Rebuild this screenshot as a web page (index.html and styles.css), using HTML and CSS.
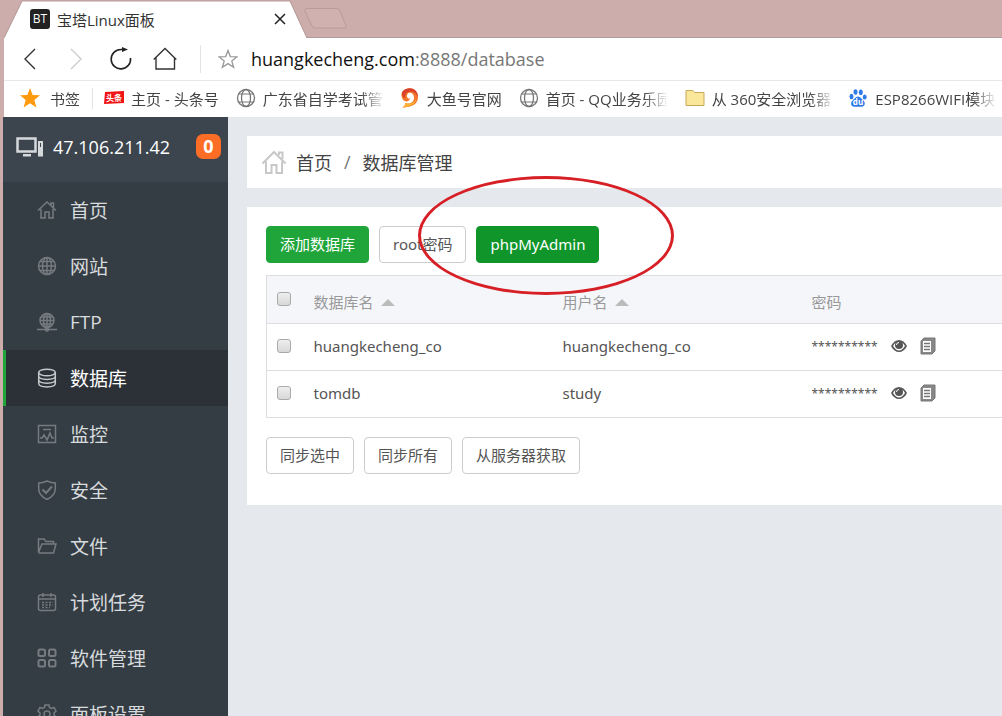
FILE: index.html
```html
<!DOCTYPE html>
<html lang="zh-CN">
  <head>
    <meta charset="utf-8" />
    <title>宝塔Linux面板</title>
    <meta name="viewport" content="width=device-width, initial-scale=1.0" />
    <link rel="stylesheet" href="styles.css">
  </head>
  <body>
    <!-- Browser chrome -->
    <header class="browser">
      <div class="tab-strip">
        <div class="tab">
          <svg class="tab-shape" viewBox="0 0 304 37" preserveAspectRatio="none">
            <path d="M0 37L18 1H286L303 37" fill="#fff" stroke="#b79a9a" />
          </svg>
          <span class="tab-logo">BT</span>
          <span class="tab-title">宝塔Linux面板</span>
          <button class="icon-button tab-close" aria-label="关闭">
            <svg width="12" height="12" viewBox="0 0 12 12">
              <path d="M1 1L11 11M11 1L1 11" stroke="#222" stroke-width="1.5" />
            </svg>
          </button>
        </div>
        <button class="icon-button new-tab" aria-label="新标签页">
          <svg width="43" height="21" viewBox="0 0 43 21">
            <path d="M3 .5H33Q35 .5 36 3L42 18Q42.500 20 40 20H11Q9 20 8 18L1 3Q.5 .5 3 .5Z" fill="#d0b1af" stroke="#b89b9b" />
          </svg>
        </button>
      </div>

      <div class="address-bar">
        <button class="icon-button nav-button" aria-label="后退">
          <svg width="24" height="24" viewBox="0 0 24 24">
            <path d="M17 2L7 12L17 22" fill="none" stroke="#333" stroke-width="1.400" />
          </svg>
        </button>
        <button class="icon-button nav-button" aria-label="前进">
          <svg width="24" height="24" viewBox="0 0 24 24">
            <path d="M8 2L18 12L8 22" fill="none" stroke="#ccc" stroke-width="1.400" />
          </svg>
        </button>
        <button class="icon-button nav-button" aria-label="刷新">
          <svg width="24" height="24" viewBox="0 0 24 24">
            <path d="M22.500 11A9.700 9.700 0 1 1 13 2.500H16" fill="none" stroke="#222" stroke-width="1.600" />
            <path d="M14 0L20 2.500L14 5Z" fill="#222" />
          </svg>
        </button>
        <button class="icon-button nav-button" aria-label="主页">
          <svg width="24" height="24" viewBox="0 0 24 24">
            <path d="M.7 12.500L12 1.500L23.300 12.500M3 10.500V22H21.500V10.500" fill="none" stroke="#333" stroke-width="1.400" />
          </svg>
        </button>
        <span class="divider"></span>
        <button class="icon-button favorite" aria-label="收藏">
          <svg width="20" height="20" viewBox="0 0 20 20">
            <path d="M10 1.500L12.300 7.600L19 7.800L13.800 11.900L15.600 18.300L10 14.600L4.400 18.300L6.200 11.900L1 7.800L7.700 7.600Z" fill="none" stroke="#999" stroke-width="1.300" />
          </svg>
        </button>
        <p class="url"><b>huangkecheng.com</b>:8888/database</p>
      </div>

      <nav class="bookmarks">
        <a class="bookmark all" href="#">
          <svg width="20" height="20" viewBox="0 0 20 20">
            <path d="M10 0L12.700 7L20 7.300L14.300 11.900L16.400 19.500L10 15.300L3.600 19.500L5.700 11.900L0 7.300L7.300 7Z" fill="#ff9a0d" />
          </svg>
          <span>书签</span>
        </a>
        <a class="bookmark" href="#">
          <svg width="20" height="20" viewBox="0 0 20 20">
            <path d="M1 4L20 3V15L0 16Z" fill="#f01414" />
            <text x="10" y="13" class="icon-text">头条</text>
          </svg>
          <span>主页 - 头条号</span>
        </a>
        <a class="bookmark" href="#">
          <svg width="20" height="20" viewBox="0 0 20 20" fill="none" stroke="#777" stroke-width="1.300">
            <circle cx="10" cy="10" r="8.500" />
            <ellipse cx="10" cy="10" rx="4.500" ry="8.500" />
            <path d="M2.500 6H17.500M2.500 14H17.500" stroke-width="1" />
          </svg>
          <span>广东省自学考试管</span>
        </a>
        <a class="bookmark" href="#">
          <svg width="20" height="20" viewBox="0 0 20 20">
            <path d="M3 3C8-2 18 0 18 9C18 16 12 19.500 2 19.500C4.500 18.500 5.500 17 5 15C11 17 14.500 13 14 9C13.500 4.500 9 3.500 7.500 6C6 9 8 11 10 10.500C9 14.500 4 14 2.500 11C1 8 1 5 3 3Z" fill="#f4762b" />
            <path d="M3 3C8-2 18 0 18 9C16 4 11 2 7 4.500C5 6 5 8 5 10C2 9 1 5 3 3Z" fill="#d9402c" />
            <path d="M2 19.500C4.500 18.500 5.500 17 5 15C12 17 16 13 16 10C17 15 11 19.500 2 19.500Z" fill="#fbb034" />
          </svg>
          <span>大鱼号官网</span>
        </a>
        <a class="bookmark" href="#">
          <svg width="20" height="20" viewBox="0 0 20 20" fill="none" stroke="#777" stroke-width="1.300">
            <circle cx="10" cy="10" r="8.500" />
            <ellipse cx="10" cy="10" rx="4.500" ry="8.500" />
            <path d="M2.500 6H17.500M2.500 14H17.500" stroke-width="1" />
          </svg>
          <span>首页 - QQ业务乐园</span>
        </a>
        <a class="bookmark" href="#">
          <svg width="20" height="20" viewBox="0 0 20 20">
            <path d="M1 17.500V2.500H8L9.500 4.500H19V17.500Z" fill="#fbe79a" stroke="#c8a85a" />
          </svg>
          <span>从 360安全浏览器</span>
        </a>
        <a class="bookmark" href="#">
          <svg width="20" height="20" viewBox="0 0 20 20" fill="#2f7be8">
            <ellipse cx="3.500" cy="8.500" rx="2" ry="2.700" />
            <ellipse cx="7.500" cy="4" rx="2" ry="2.800" />
            <ellipse cx="12.800" cy="4.200" rx="2" ry="2.800" />
            <ellipse cx="16.700" cy="9" rx="2" ry="2.600" />
            <path d="M10 8.500C12.500 8.500 13.500 11 15.500 12.500C18 15 16.500 19 13.500 18.700H6.500C3 19 2 15 4.500 12.500C6.500 11 7.500 8.500 10 8.500Z" />
            <text x="10" y="17" class="icon-text">du</text>
          </svg>
          <span>ESP8266WIFI模块</span>
        </a>
      </nav>
    </header>

    <div class="page">
      <aside class="sidebar">
        <div class="server">
          <svg width="28" height="20" viewBox="0 0 28 20">
            <path d="M1.500 1.500H19.500V14.500H1.500Z" fill="none" stroke="#d5d9dc" stroke-width="2.500" />
            <path d="M7 17H15V19.500H7ZM22 4H27V19.500H22Z" fill="#d5d9dc" />
            <path d="M24.500 6V10" stroke="#3c444d" />
          </svg>
          <span class="server-ip">47.106.211.42</span>
          <span class="badge">0</span>
        </div>
        <ul class="menu">
          <li>
            <a href="#">
              <svg viewBox="0 0 20 20">
                <path d="M1 10.500L10 2L19 10.500M4 9V18H8V12H12V18H16V9M14 5V3H16.500V7.500" />
              </svg>
              首页
            </a>
          </li>
          <li>
            <a href="#">
              <svg viewBox="0 0 20 20">
                <circle cx="10" cy="10" r="8.500" />
                <ellipse cx="10" cy="10" rx="4.500" ry="8.500" />
                <path d="M10 1.500V18.500M1.500 10H18.500M3 5.500H17M3 14.500H17" />
              </svg>
              网站
            </a>
          </li>
          <li>
            <a href="#">
              <svg viewBox="0 0 20 20">
                <circle cx="10" cy="8.500" r="7" />
                <ellipse cx="10" cy="8.500" rx="3.500" ry="7" />
                <path d="M10 1.500V18M3 8.500H17M4 5H16M4 12H16M0 17.500H20" />
                <circle cx="10" cy="17.500" r="1.500" />
              </svg>
              FTP
            </a>
          </li>
          <li class="active">
            <a href="#">
              <svg viewBox="0 0 20 20">
                <ellipse cx="10" cy="4.500" rx="8.300" ry="3.300" />
                <path d="M1.700 4.500V15.500C1.700 20 18.300 20 18.300 15.500V4.500M1.700 8C1.700 12.500 18.300 12.500 18.300 8M1.700 11.800C1.700 16.300 18.300 16.300 18.300 11.800" />
              </svg>
              数据库
            </a>
          </li>
          <li>
            <a href="#">
              <svg viewBox="0 0 20 20">
                <path d="M1.500 1.500H18.500V18.500H1.500ZM6 5.500H14M3 14H5L7 11L10 16L13 9L15 14H17" />
              </svg>
              监控
            </a>
          </li>
          <li>
            <a href="#">
              <svg viewBox="0 0 20 20">
                <path d="M10 1C13 2.500 15 3 18.300 3V9C18.300 14 15 17 10 19.500C5 17 1.700 14 1.700 9V3C5 3 7 2.500 10 1Z" />
                <path d="M5.500 9.500L9 13L15 6.500" stroke-width="2" />
              </svg>
              安全
            </a>
          </li>
          <li>
            <a href="#">
              <svg viewBox="0 0 20 20">
                <path d="M1.500 16.500V3H7L9 5.500H16.500V8M1.500 16.500L5 8H19L16.500 17H1.500" />
              </svg>
              文件
            </a>
          </li>
          <li>
            <a href="#">
              <svg viewBox="0 0 20 20">
                <rect x="1.500" y="3" width="17" height="15.500" rx="2" />
                <path d="M2 7H18M6 1V5M14 1V5" />
                <path d="M5 10.500H16M5 13H16M5 15.500H13" stroke-dasharray="2 1.500" />
              </svg>
              计划任务
            </a>
          </li>
          <li>
            <a href="#">
              <svg viewBox="0 0 20 20">
                <g stroke-width="2">
                  <rect x="1.500" y="1.500" width="6.500" height="6.500" rx="1.500" />
                  <rect x="12" y="1.500" width="6.500" height="6.500" rx="1.500" />
                  <rect x="1.500" y="12" width="6.500" height="6.500" rx="1.500" />
                  <rect x="12" y="12" width="6.500" height="6.500" rx="1.500" />
                </g>
              </svg>
              软件管理
            </a>
          </li>
          <li>
            <a href="#">
              <svg viewBox="0 0 20 20">
                <path d="M8 1H12L12.500 3.500L14.500 4.500L17 3.500L19 7L17 9V11L19 13L17 16.500L14.500 15.500L12.500 16.500L12 19H8L7.500 16.500L5.500 15.500L3 16.500L1 13L3 11V9L1 7L3 3.500L5.500 4.500L7.500 3.500Z" />
                <circle cx="10" cy="10" r="3" />
              </svg>
              面板设置
            </a>
          </li>
        </ul>
      </aside>

      <main class="content">
        <nav class="breadcrumb">
          <svg width="26" height="26" viewBox="0 0 26 26">
            <path d="M1.500 14.500L13 3L24.500 14.500M5 12.500V24H10.500V16H15.500V24H21V12.500M18 6V3.500H21.500V10" fill="none" stroke="#c8c8c8" stroke-width="2" />
          </svg>
          <a href="#">首页</a>
          <span class="slash">/</span>
          <span>数据库管理</span>
        </nav>

        <section class="panel">
          <div class="toolbar">
            <button class="btn btn-success">添加数据库</button>
            <button class="btn">root密码</button>
            <div class="marked">
              <button class="btn btn-success pressed">phpMyAdmin</button>
              <span class="circle-mark"></span>
            </div>
          </div>

          <table class="db-table">
            <thead>
              <tr>
                <th class="check"><input type="checkbox" aria-label="全选" /></th>
                <th class="name">数据库名 <i class="sort"></i></th>
                <th class="name">用户名 <i class="sort"></i></th>
                <th>密码</th>
              </tr>
            </thead>
            <tbody>
              <tr>
                <td class="check"><input type="checkbox" aria-label="huangkecheng_co" /></td>
                <td>huangkecheng_co</td>
                <td>huangkecheng_co</td>
                <td>
                  <div class="password">
                    <span>**********</span>
                    <button class="icon-button" aria-label="显示密码">
                      <svg width="16" height="14" viewBox="0 0 16 14">
                        <path d="M0 7C4-1 12-1 16 7C12 15 4 15 0 7Z" fill="#555" />
                        <path d="M2 7C4 3.500 6 2.500 8 2.500C10 2.500 12 3.500 14 7C12 10 10 11.500 8 11.500C6 11.500 4 10 2 7Z" fill="#fff" />
                        <circle cx="8" cy="6" r="4" fill="#555" />
                        <path d="M5.500 6A2.500 2.500 0 0 1 8 3.500" fill="none" stroke="#fff" />
                      </svg>
                    </button>
                    <button class="icon-button" aria-label="复制密码">
                      <svg width="16" height="18" viewBox="0 0 16 18">
                        <path d="M4 1H15V14L12 17H1V4Z" fill="#888" stroke="#777" />
                        <path d="M3 4H11V15H3Z" fill="#fff" />
                        <path d="M4 6.500H10M4 9.500H10M4 12.500H10" stroke="#777" stroke-width="1.500" />
                      </svg>
                    </button>
                  </div>
                </td>
              </tr>
              <tr>
                <td class="check"><input type="checkbox" aria-label="tomdb" /></td>
                <td>tomdb</td>
                <td>study</td>
                <td>
                  <div class="password">
                    <span>**********</span>
                    <button class="icon-button" aria-label="显示密码">
                      <svg width="16" height="14" viewBox="0 0 16 14">
                        <path d="M0 7C4-1 12-1 16 7C12 15 4 15 0 7Z" fill="#555" />
                        <path d="M2 7C4 3.500 6 2.500 8 2.500C10 2.500 12 3.500 14 7C12 10 10 11.500 8 11.500C6 11.500 4 10 2 7Z" fill="#fff" />
                        <circle cx="8" cy="6" r="4" fill="#555" />
                        <path d="M5.500 6A2.500 2.500 0 0 1 8 3.500" fill="none" stroke="#fff" />
                      </svg>
                    </button>
                    <button class="icon-button" aria-label="复制密码">
                      <svg width="16" height="18" viewBox="0 0 16 18">
                        <path d="M4 1H15V14L12 17H1V4Z" fill="#888" stroke="#777" />
                        <path d="M3 4H11V15H3Z" fill="#fff" />
                        <path d="M4 6.500H10M4 9.500H10M4 12.500H10" stroke="#777" stroke-width="1.500" />
                      </svg>
                    </button>
                  </div>
                </td>
              </tr>
            </tbody>
          </table>

          <div class="toolbar">
            <button class="btn">同步选中</button>
            <button class="btn">同步所有</button>
            <button class="btn">从服务器获取</button>
          </div>
        </section>
      </main>
    </div>
  </body>
</html>
```
FILE: styles.css
```css
* {
  box-sizing: border-box;
}

body {
  margin: 0;
  height: 100vh;
  overflow: hidden;
  display: flex;
  flex-direction: column;
  background-color: #ccadab;
  font-family: "Open Sans", "Noto Sans CJK SC", sans-serif;
  font-size: 15px;
  color: #555;
}

a {
  color: inherit;
  text-decoration: none;
}

svg {
  display: block;
  flex: none;
}

.icon-button {
  display: block;
  padding: 0;
  border: none;
  background: none;
  cursor: pointer;
}

/* Browser */
.browser {
  padding-left: 4px;
}

.tab-strip {
  display: flex;
  height: 38px;
  box-shadow: inset 0 -1px #b39a9b;
}

.tab {
  position: relative;
  display: flex;
  align-items: center;
  width: 304px;
  padding: 0 22px 0 26px;
}

.tab-shape {
  position: absolute;
  top: 0;
  left: 0;
  width: 100%;
  height: 100%;
}

.tab-logo {
  z-index: 1;
  width: 20px;
  line-height: 20px;
  margin-right: 7px;
  border-radius: 3px;
  background-color: #222;
  color: #fff;
  font-size: 12px;
  text-align: center;
}

.tab-title {
  z-index: 1;
  font-size: 15px;
  color: #333;
}

.tab-close {
  z-index: 1;
  margin-left: auto;
}

.new-tab {
  align-self: flex-start;
  margin-top: 8px;
  margin-left: -4px;
}

.address-bar {
  display: flex;
  align-items: center;
  height: 43px;
  padding-left: 14px;
  background-color: #fff;
  border-bottom: 1px solid #e8e8e8;
}

.nav-button {
  margin-right: 21px;
}

.divider {
  width: 1px;
  height: 28px;
  margin-left: 2px;
  background-color: #e4e4e4;
}

.favorite {
  margin: 0 13px 0 17px;
}

.url {
  margin: 0;
  font-size: 18px;
  color: #777;
}

.url b {
  font-weight: normal;
  color: #111;
}

.bookmarks {
  display: flex;
  align-items: center;
  gap: 17px;
  height: 36px;
  padding: 0 0 2px 16px;
  background-color: #fff;
  color: #444;
  white-space: nowrap;
}

.bookmark {
  display: flex;
  align-items: center;
  gap: 7px;
}

.bookmark span {
  max-width: 122px;
  overflow: hidden;
  -webkit-mask-image: linear-gradient(to right, #000 98px, transparent 122px);
  mask-image: linear-gradient(to right, #000 98px, transparent 122px);
}

.bookmark.all {
  gap: 10px;
  padding-right: 12px;
  margin-right: -6px;
  border-right: 1px solid #e4e4e4;
}

.icon-text {
  fill: #fff;
  stroke: none;
  font-size: 8px;
  font-weight: bold;
  text-anchor: middle;
}

/* Page */
.page {
  display: flex;
  flex: 1;
  min-height: 0;
  margin-left: 3px;
  background-color: #e5e8ed;
}

.sidebar {
  width: 225px;
  flex: none;
  overflow: hidden;
  background-color: #353d44;
}

.server {
  display: flex;
  align-items: center;
  height: 65px;
  padding: 0 7px 6px 13px;
  background-color: #3c444d;
  color: #fff;
}

.server-ip {
  margin-left: 9px;
  font-size: 18px;
}

.badge {
  width: 25px;
  line-height: 25px;
  margin-left: auto;
  border-radius: 7px;
  background-color: #fc6d26;
  font-size: 18px;
  font-weight: bold;
  text-align: center;
}

.menu {
  list-style: none;
  margin: 0;
  padding: 0;
}

.menu a {
  display: flex;
  align-items: center;
  gap: 13px;
  height: 56px;
  padding-left: 31px;
  border-left: 3px solid transparent;
  font-size: 19px;
  color: #d8dbdd;
}

.menu svg {
  width: 20px;
  height: 20px;
  fill: none;
  stroke: #757b80;
  stroke-width: 1.5;
}

.menu .active a {
  border-left-color: #20a53a;
  background-color: #2c3138;
  color: #fff;
}

.menu .active svg {
  stroke: #c5c8ca;
}

.content {
  flex: 1;
  min-width: 0;
  padding: 19px 0 0 19px;
}

.breadcrumb {
  display: flex;
  align-items: center;
  height: 52px;
  margin-bottom: 19px;
  padding-left: 14px;
  background-color: #fff;
  color: #444;
  font-size: 18px;
}

.breadcrumb a {
  margin-left: 9px;
}

.slash {
  margin: 0 12px;
  color: #777;
}

.panel {
  padding: 19px 0 31px 19px;
  background-color: #fff;
  font-family: "Noto Sans", "Noto Sans CJK SC", sans-serif;
}

.toolbar {
  display: flex;
  gap: 10px;
}

.btn {
  height: 37px;
  padding: 0 13px 2px;
  border: 1px solid #ccc;
  border-radius: 4px;
  background-color: #fff;
  color: #555;
  font-family: inherit;
  font-size: 15px;
  cursor: pointer;
}

.btn-success {
  border-color: #20a53a;
  background-color: #20a53a;
  color: #fff;
}

.btn-success.pressed {
  border-color: #10952a;
  background-color: #10952a;
}

.marked {
  position: relative;
}

/* Hand-drawn highlight over the button */
.circle-mark {
  position: absolute;
  top: -50px;
  left: -58px;
  width: 256px;
  height: 119px;
  border: 3px solid #d71f26;
  border-radius: 50%;
  pointer-events: none;
}

.db-table {
  width: 100%;
  margin: 12px 0 19px;
  table-layout: fixed;
  border-collapse: collapse;
  border: 1px solid #ddd;
  border-right: none;
}

.db-table th,
.db-table td {
  height: 47px;
  padding: 0 0 2px;
  border-bottom: 1px solid #ddd;
  text-align: left;
}

.db-table th {
  height: 48px;
  padding-top: 5px;
  background-color: #f5f6fa;
  color: #999;
  font-weight: normal;
}

.db-table .check {
  width: 47px;
  padding: 0 0 2px 10px;
}

.db-table .name {
  width: 249px;
}

.db-table input {
  display: block;
  appearance: none;
  width: 14px;
  height: 14px;
  margin: 0;
  border: 1px solid #aaa;
  border-radius: 3px;
  background: linear-gradient(#eee, #d8d8d8);
}

.sort {
  display: inline-block;
  margin-left: 4px;
  border: 7px solid transparent;
  border-top: none;
  border-bottom: 7px solid #bbb;
  vertical-align: 2px;
}

.password {
  display: flex;
  align-items: center;
  gap: 13px;
}

.password span {
  font-size: 12px;
}
```
